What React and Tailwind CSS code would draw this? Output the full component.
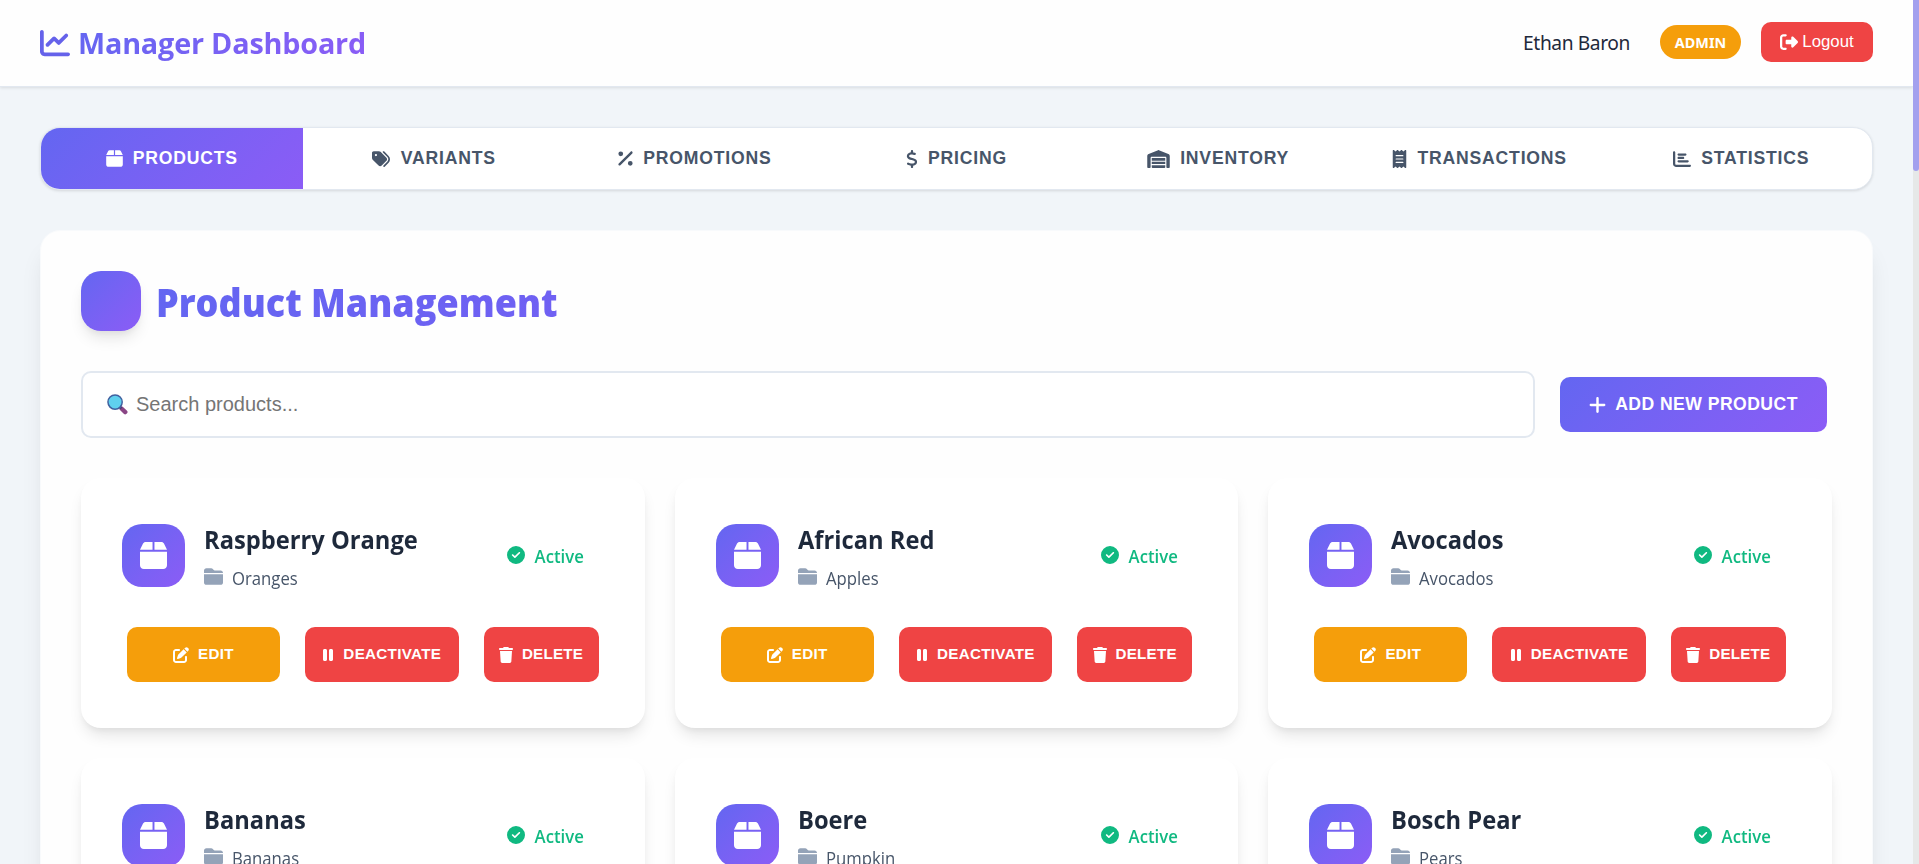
import React from "react";
import {
  FaBox,
  FaChartBar,
  FaChartLine,
  FaCircleCheck,
  FaDollarSign,
  FaFolderClosed,
  FaPause,
  FaPenToSquare,
  FaPercent,
  FaPlus,
  FaReceipt,
  FaRightFromBracket,
  FaTags,
  FaTrash,
  FaWarehouse,
} from "react-icons/fa6";

const tabs = [
  { label: "PRODUCTS", Icon: FaBox, icon: "h-[19px] w-[17px]", active: true },
  { label: "VARIANTS", Icon: FaTags, icon: "h-[18px] w-[20px]" },
  { label: "PROMOTIONS", Icon: FaPercent, icon: "h-[19px] w-[15px]" },
  { label: "PRICING", Icon: FaDollarSign, icon: "h-[18px] w-[12px]" },
  { label: "INVENTORY", Icon: FaWarehouse, icon: "h-[18px] w-[23px]" },
  { label: "TRANSACTIONS", Icon: FaReceipt, icon: "h-[18px] w-[15px]" },
  { label: "STATISTICS", Icon: FaChartBar, icon: "h-[18px] w-[18px]" },
];

const products = [
  { name: "Raspberry Orange", category: "Oranges" },
  { name: "African Red", category: "Apples" },
  { name: "Avocados", category: "Avocados" },
  { name: "Bananas", category: "Bananas" },
  { name: "Boere", category: "Pumpkin" },
  { name: "Bosch Pear", category: "Pears" },
];

function Magnifier() {
  return (
    <svg viewBox="0 0 20 20" className="h-[21px] w-[21px] shrink-0">
      <path d="M13.8 13.8 17.4 17.2" stroke="#8a4585" strokeWidth="4.2" strokeLinecap="round" />
      <path d="M11.8 11.8 13.8 13.8" stroke="#4a3f73" strokeWidth="2.2" />
      <circle cx="7.7" cy="7.7" r="6.8" fill="#5fd0ee" stroke="#41609f" strokeWidth="1.4" />
    </svg>
  );
}

function Header() {
  return (
    <header className="flex h-[87px] shrink-0 items-center justify-between border-b border-[#e2e8f0] bg-[#fefefe] px-10 shadow-[0_1px_3px_rgba(0,0,0,0.1)]">
      <div className="flex items-center gap-2">
        <FaChartLine className="h-[30px] w-[30px] text-[#6562ea]" />
        <h1 className="mb-px bg-linear-135 from-[#6366f1] to-[#8b5cf6] bg-clip-text font-['Open_Sans','Noto_Sans',sans-serif] text-[28.8px] leading-[42px] font-bold tracking-[-0.2px] text-transparent">
          Manager Dashboard
        </h1>
      </div>
      <div className="flex items-center pb-[2px]">
        <span className="mr-[30px] pt-[3px] text-[19.2px] tracking-[-0.4px] text-[#1e293b]">Ethan Baron</span>
        <span className="mr-5 flex h-[34px] w-[81px] items-center justify-center rounded-[20px] bg-[#f59e0b] pt-px text-[14.4px] font-bold text-white">
          ADMIN
        </span>
        <button className="flex h-10 w-[112px] items-center justify-center gap-1 rounded-[10px] bg-[#ef4444] font-['Liberation_Sans',sans-serif] text-[16.8px] text-white">
          <FaRightFromBracket className="h-[18px] w-[18px]" />
          Logout
        </button>
      </div>
    </header>
  );
}

function Tabs() {
  return (
    <nav className="flex h-[63px] shrink-0 overflow-hidden rounded-[20px] border border-[#e2e8f0] bg-white shadow-[0_1px_3px_rgba(0,0,0,0.12)]">
      {tabs.map(({ label, Icon, icon, active }) => (
        <button
          key={label}
          className={`flex flex-1 items-center justify-center gap-[10px] font-['Liberation_Sans',sans-serif] text-[17.6px] font-bold tracking-[0.8px] ${
            active ? "bg-linear-135 from-[#6366f1] to-[#8b5cf6] text-white" : "text-[#475569]"
          }`}
        >
          <Icon className={icon} />
          {label}
        </button>
      ))}
    </nav>
  );
}

function ActionButton({ Icon, icon, className, children }) {
  return (
    <button
      className={`flex h-[55px] items-center justify-center gap-[9px] rounded-[10px] font-['Liberation_Sans',sans-serif] text-[15.2px] font-bold text-white ${className}`}
    >
      <Icon className={icon} />
      {children}
    </button>
  );
}

function ProductCard({ name, category }) {
  return (
    <article className="h-[250px] rounded-[20px] bg-white px-[41px] pt-[46px] font-['Open_Sans','Noto_Sans',sans-serif] shadow-[0_10px_15px_-3px_rgba(0,0,0,0.1),0_4px_6px_-2px_rgba(0,0,0,0.05)]">
      <div className="flex h-[63px] items-center">
        <div className="flex h-[63px] w-[63px] items-center justify-center rounded-[20px] bg-linear-135 from-[#6366f1] to-[#8b5cf6] text-white">
          <FaBox className="h-[31px] w-[27px]" />
        </div>
        <div className="ml-[19px] flex-1 pt-[6px]">
          <h3 className="origin-left scale-x-[0.926] text-[25.6px] leading-[38px] font-bold text-[#1e293b]">{name}</h3>
          <div className="flex items-center gap-[9px] text-[17.6px] leading-[38px] text-[#475569]">
            <FaFolderClosed className="mb-[2px] h-[19px] w-[19px] text-[#94a3b8]" />
            <span className="origin-left scale-x-[0.95]">{category}</span>
          </div>
        </div>
        <div className="mr-[20px] flex items-center gap-[7px] text-[17.6px] font-semibold text-[#10b981]">
          <FaCircleCheck className="h-[18px] w-[18px]" />
          <span className="origin-right scale-x-[0.95] pt-[2px]">Active</span>
        </div>
      </div>
      <div className="mt-10 ml-[5px] flex gap-[25px]">
        <ActionButton Icon={FaPenToSquare} icon="h-4 w-4" className="w-[153px] bg-[#f59e0b] tracking-[0.3px]">
          EDIT
        </ActionButton>
        <ActionButton Icon={FaPause} icon="h-[16px] w-[12px]" className="w-[153.5px] bg-[#ef4444] tracking-[0.3px]">
          DEACTIVATE
        </ActionButton>
        <ActionButton Icon={FaTrash} icon="h-[16px] w-[14px]" className="w-[115px] bg-[#ef4444] tracking-[0.2px]">
          DELETE
        </ActionButton>
      </div>
    </article>
  );
}

export default function App() {
  return (
    <div className="flex h-[864px] overflow-hidden bg-[#f1f5f9] font-['Noto_Sans',sans-serif]">
      <div className="flex min-w-0 flex-1 flex-col">
        <Header />
        <main className="flex flex-col gap-10 px-10 pt-10">
          <Tabs />
          <section className="shrink-0 rounded-[20px] border border-[#f8fafc] bg-[#fefefe] p-10 shadow-[0_20px_25px_-5px_rgba(0,0,0,0.1),0_10px_10px_-5px_rgba(0,0,0,0.04)]">
            <div className="flex h-[60px] items-center gap-[15px]">
              <div className="h-[60px] w-[60px] rounded-[20px] bg-linear-135 from-[#6366f1] to-[#8b5cf6] shadow-[0_10px_15px_-3px_rgba(0,0,0,0.1),0_4px_6px_-2px_rgba(0,0,0,0.05)]" />
              <h2 className="origin-left scale-x-[0.937] bg-linear-135 from-[#6366f1] to-[#7060f3] bg-clip-text pt-px font-['Open_Sans','Noto_Sans',sans-serif] text-[38.4px] leading-[58px] font-extrabold text-transparent">
                Product Management
              </h2>
            </div>
            <div className="mt-10 flex items-center gap-[25px]">
              <div className="flex h-[67px] w-[1454px] items-center gap-2 rounded-[10px] border-2 border-[#e2e8f0] bg-white px-6 font-['Liberation_Sans',sans-serif] text-[20px] text-[#757575]">
                <Magnifier />
                <span className="pb-[2px]">Search products...</span>
              </div>
              <button className="flex h-[55px] w-[267px] items-center justify-center gap-[9px] rounded-[10px] bg-linear-135 from-[#6366f1] to-[#8b5cf6] font-['Liberation_Sans',sans-serif] text-[17.6px] font-bold tracking-[0.45px] text-white">
                <FaPlus className="h-[20px] w-[17px]" />
                ADD NEW PRODUCT
              </button>
            </div>
            <div className="mt-10 grid grid-cols-3 gap-[30px]">
              {products.map((product) => (
                <ProductCard key={product.name} {...product} />
              ))}
            </div>
          </section>
        </main>
      </div>
      <div className="h-full w-[6px] bg-[#e6e8e8]">
        <div className="h-[171px] rounded-b-[3px] bg-[#a3a0ee]" />
      </div>
    </div>
  );
}
